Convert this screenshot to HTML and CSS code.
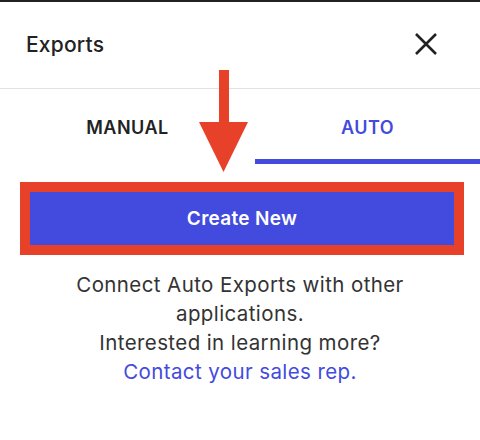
FILE: index.html
```html
<!DOCTYPE html>
<html lang="en">
<head>
  <meta charset="UTF-8">
  <meta name="viewport" content="width=device-width, initial-scale=1.0">
  <title>Exports</title>
  <link rel="stylesheet" href="styles.css">
</head>
<body>
  <div class="panel">
    <div class="topbar"></div>

    <div class="header">
      <h2 class="title">Exports</h2>
      <button class="close-btn" aria-label="Close">
        <svg width="24" height="24" viewBox="0 0 24 24">
          <path d="M2 2 L22 22 M22 2 L2 22" stroke="#222" stroke-width="2.6" fill="none"/>
        </svg>
      </button>
    </div>

    <div class="tabs">
      <div class="tab">MANUAL</div>
      <div class="tab active">AUTO</div>
    </div>

    <div class="content">
      <div class="highlight">
        <button class="create-btn">Create New</button>
      </div>
      <p class="info">
        Connect Auto Exports with other applications.<br>
        Interested in learning more?<br>
        <a href="#" class="sales-link">Contact your sales rep.</a>
      </p>
    </div>

    <!-- annotation arrow pointing at the button -->
    <svg class="arrow" width="49" height="102" viewBox="0 0 49 102">
      <rect x="20" y="0" width="10" height="54" fill="#e8412a"/>
      <polygon points="0,52 49,52 24.5,102" fill="#e8412a"/>
    </svg>
  </div>
</body>
</html>
```

FILE: styles.css
```css
body {
  margin: 0;
  padding: 0;
  background-color: #fff;
  font-family: Inter, "Noto Sans", sans-serif;
  color: #2b2b2b;
}
.panel {
  position: relative;
  width: 480px;
  height: 440px;
  overflow: hidden;
}
.topbar {
  height: 2px;
  background-color: #222;
}
.header {
  height: 86px;
  display: flex;
  align-items: center;
  justify-content: space-between;
  padding: 0 42px 0 26px;
  border-bottom: 1px solid #e2e2e2;
}
.title {
  margin: 0 0 2px;
  font-size: 21px;
  font-weight: 500;
  letter-spacing: 0.2px;
  color: #222;
}
.close-btn {
  background: none;
  border: none;
  padding: 0;
  display: flex;
  margin-bottom: 2px;
  cursor: pointer;
}
.tabs {
  display: grid;
  grid-template-columns: 255px 1fr;
}
.tab {
  text-align: center;
  font-size: 18px;
  font-weight: 600;
  letter-spacing: 0.5px;
  line-height: 20px;
  padding: 29px 0 21px;
  border-bottom: 5px solid transparent;
  color: #222;
}
.tab.active {
  color: #434ade;
  border-bottom-color: #434ade;
}
.content {
  padding-top: 18px;
}
.highlight {
  margin: 0 16px 0 20px;
  border: 10px solid #e8412a;
}
.create-btn {
  display: block;
  width: 100%;
  height: 53px;
  border: none;
  background-color: #434ade;
  color: #fff;
  font-family: inherit;
  font-size: 19px;
  font-weight: 600;
  letter-spacing: 0.3px;
  cursor: pointer;
}
.info {
  margin: 15px auto 0;
  max-width: 400px;
  text-align: center;
  font-size: 20.5px;
  letter-spacing: 0.4px;
  line-height: 29px;
  color: #333;
}
.sales-link {
  color: #434ade;
  text-decoration: none;
}
.arrow {
  position: absolute;
  left: 199px;
  top: 70px;
}
```
